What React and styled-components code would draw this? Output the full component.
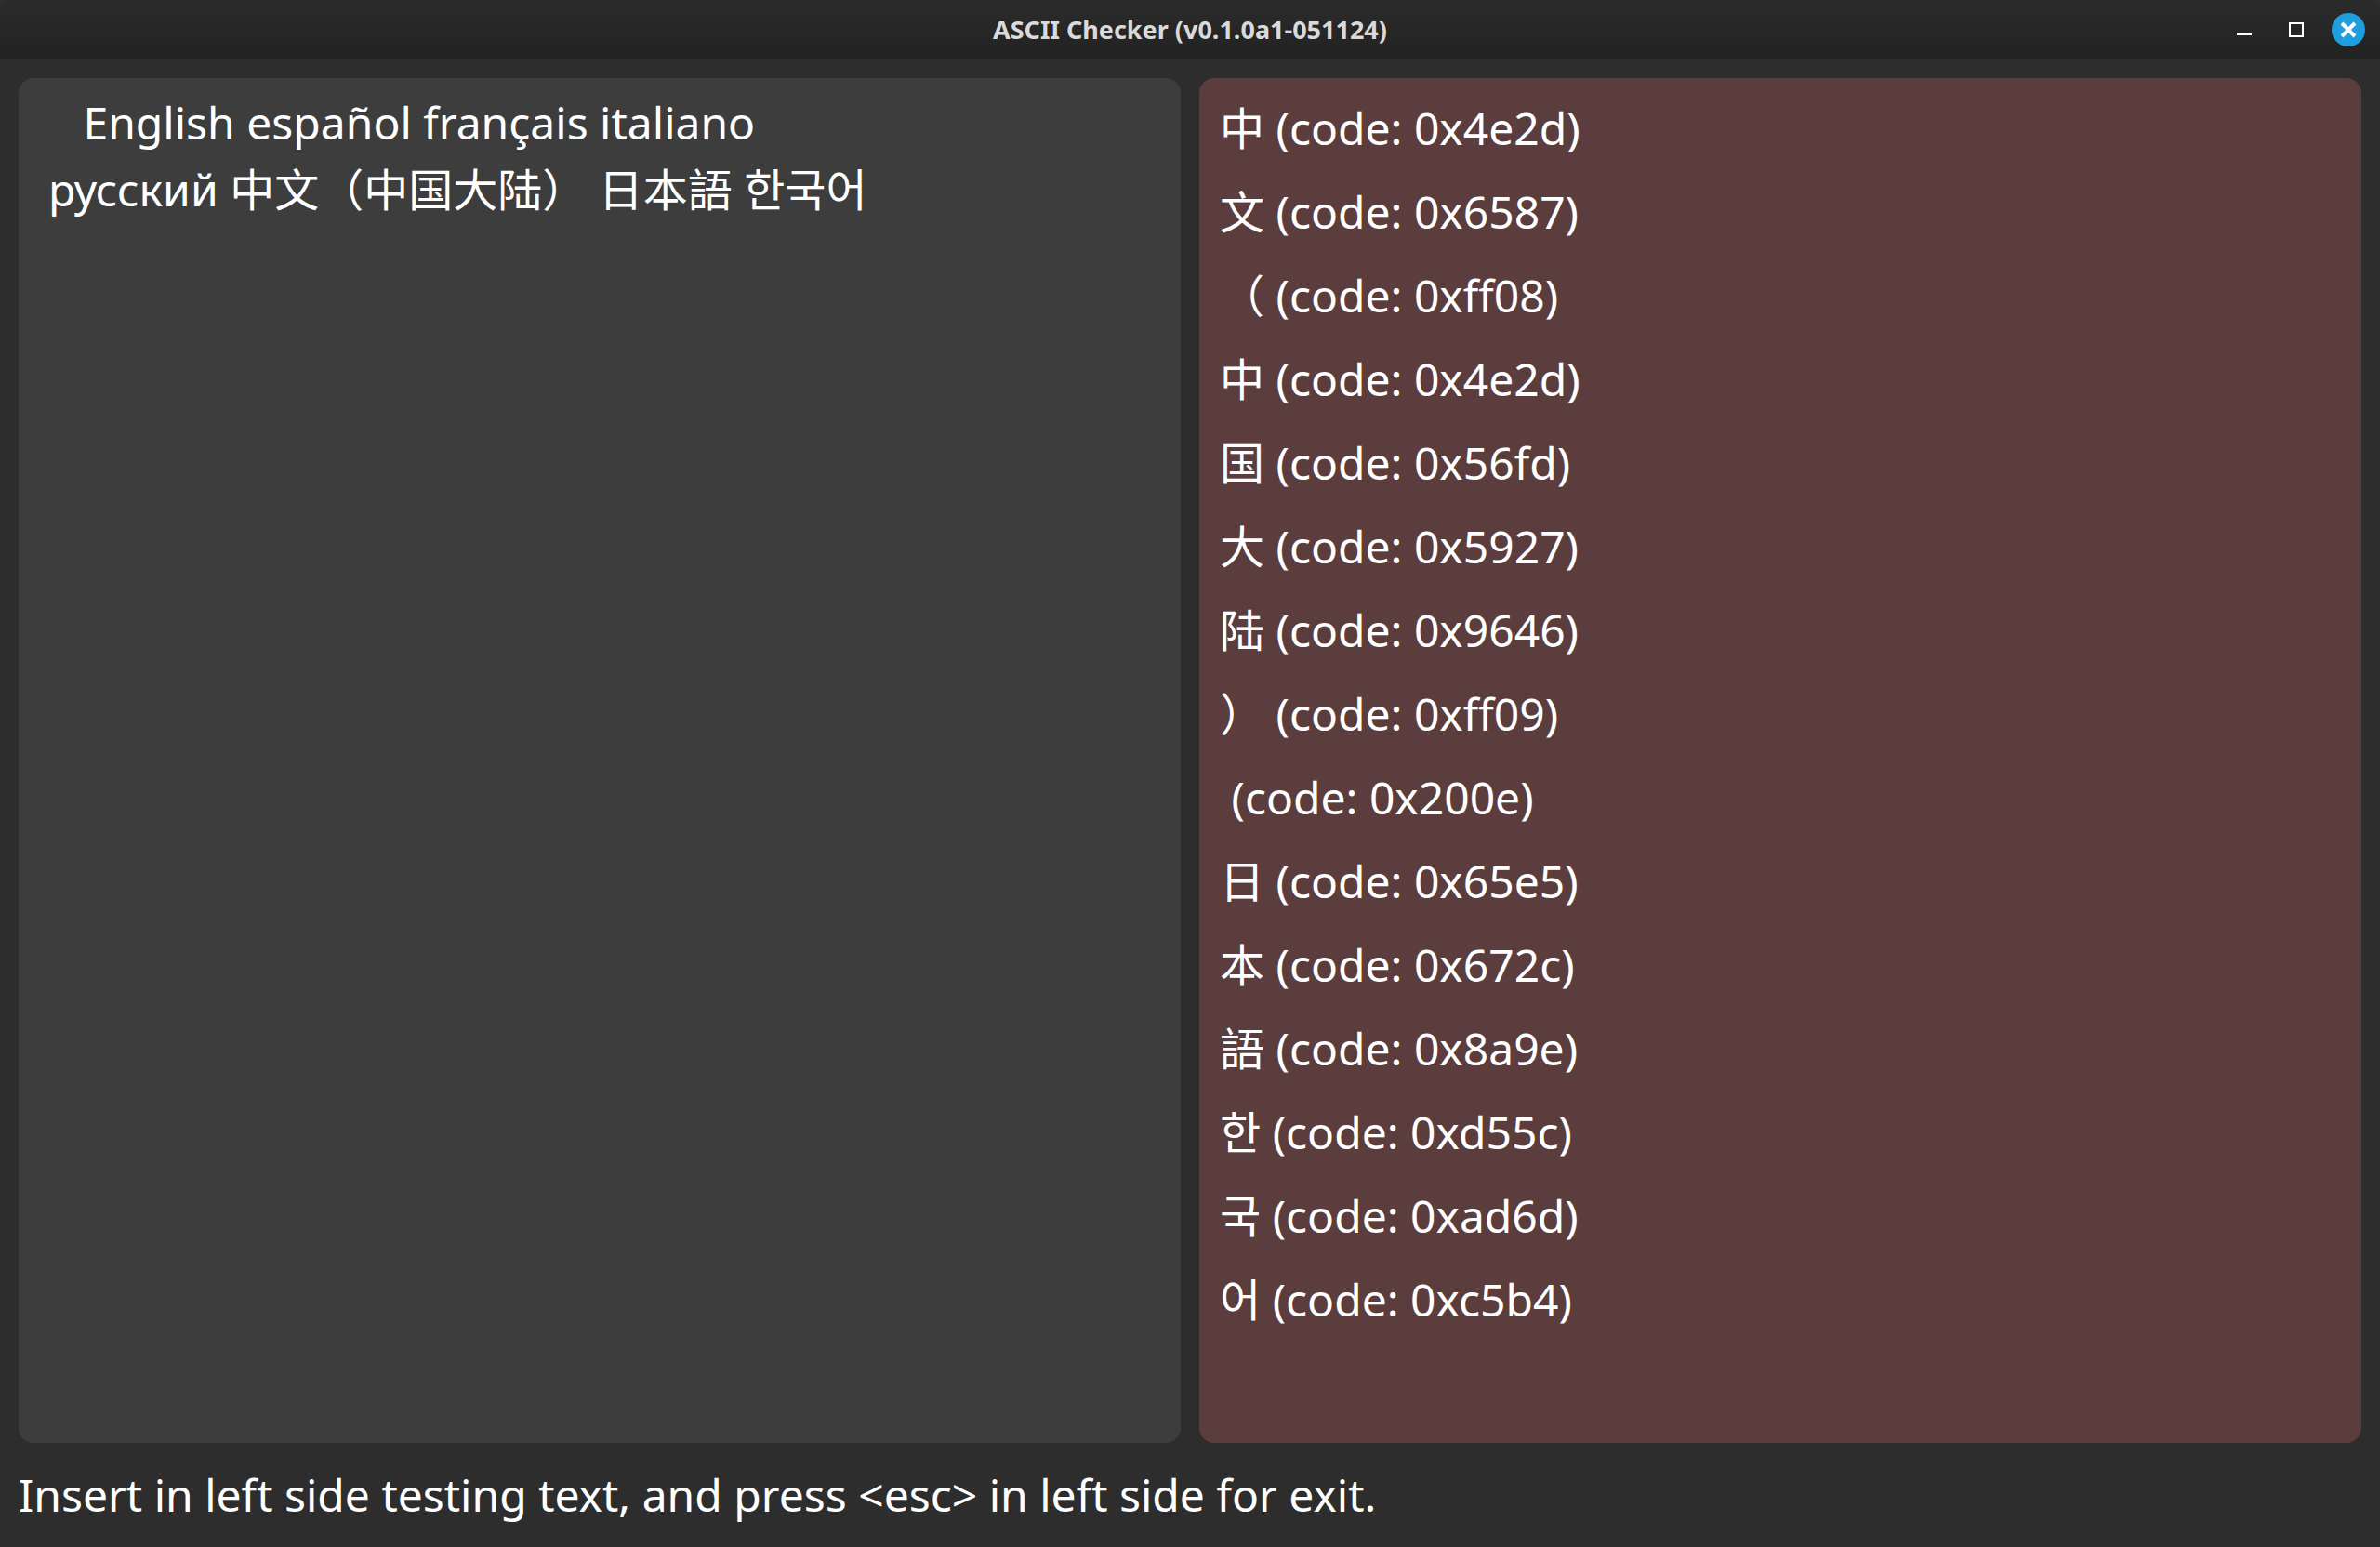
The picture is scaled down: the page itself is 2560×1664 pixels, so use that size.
import React from 'react';
import styled, { createGlobalStyle } from 'styled-components';

const Global = createGlobalStyle`
  * { box-sizing: border-box; }
  html, body { margin: 0; background: #2d2d2d; }
  body { font-family: "Noto Sans", "Noto Sans CJK SC", sans-serif; color: #fff; }
`;
const Window = styled.div`
  min-height: 100vh;
  display: flex;
  flex-direction: column;
  background: #2d2d2d;
  border-radius: 12px 12px 0 0;
  overflow: hidden;
`;
const TitleBar = styled.header`
  display: grid;
  grid-template-columns: 1fr auto 1fr;
  align-items: center;
  height: 64px;
  padding: 0 16px;
  background: linear-gradient(#2b2b2b, #222);
`;
const Title = styled.h1`
  grid-column: 2;
  margin: 0;
  font-size: 27px;
  line-height: 40px;
  font-weight: 700;
  color: #dadada;
`;
const Controls = styled.div`
  display: flex;
  justify-content: flex-end;
  gap: 20px;
`;
const ControlButton = styled.button`
  width: 36px;
  height: 36px;
  padding: 0;
  border: 0;
  border-radius: 50%;
  color: #fff;
  background: ${(p) => (p.$accent ? '#1f9ede' : 'transparent')};
  svg { display: block; }
`;
const Panels = styled.main`
  flex: 1;
  display: grid;
  grid-template-columns: 1fr 1fr;
  gap: 20px;
  padding: 20px 20px 0;
`;
const Editor = styled.textarea`
  display: block;
  width: 100%;
  height: 100%;
  resize: none;
  border: 0;
  outline: 0;
  border-radius: 16px;
  padding: 12px 32px;
  background: #3d3d3d;
  color: #fff;
  font: 48px/72px "Noto Sans", "Noto Sans CJK SC", sans-serif;
`;
const CodeList = styled.ul`
  margin: 0;
  padding: 9px 22px;
  list-style: none;
  border-radius: 16px;
  background: #5c3d3d;
`;
const CodeRow = styled.li`
  font-size: 48px;
  line-height: 90px;
  white-space: pre;
`;
const Hint = styled.footer`
  padding: 20px;
  font-size: 48px;
  line-height: 72px;
`;

const text = '   English español français italiano\nрусский 中文（中国大陆）\u200e 日本語 한국어';
const found = [...text].filter((c) => c.codePointAt(0) > 0x1fff);

export default function App() {
  return (
    <Window>
      <Global />
      <TitleBar>
        <Title>ASCII Checker (v0.1.0a1-051124)</Title>
        <Controls>
          <ControlButton aria-label="Minimize">
            <svg width="36" height="36" viewBox="0 0 36 36" fill="none" stroke="currentColor" strokeWidth="2"><path d="M10 23h16" /></svg>
          </ControlButton>
          <ControlButton aria-label="Maximize">
            <svg width="36" height="36" viewBox="0 0 36 36" fill="none" stroke="currentColor" strokeWidth="2"><path d="M11 11h14v14H11z" /></svg>
          </ControlButton>
          <ControlButton $accent aria-label="Close">
            <svg width="36" height="36" viewBox="0 0 36 36" fill="none" stroke="currentColor" strokeWidth="4"><path d="M11 11l14 14M25 11L11 25" /></svg>
          </ControlButton>
        </Controls>
      </TitleBar>
      <Panels>
        <Editor aria-label="Testing text" defaultValue={text} spellCheck={false} />
        <CodeList>
          {found.map((c, i) => (
            <CodeRow key={i}>{c} (code: 0x{c.codePointAt(0).toString(16)})</CodeRow>
          ))}
        </CodeList>
      </Panels>
      <Hint>Insert in left side testing text, and press &lt;esc&gt; in left side for exit.</Hint>
    </Window>
  );
}
